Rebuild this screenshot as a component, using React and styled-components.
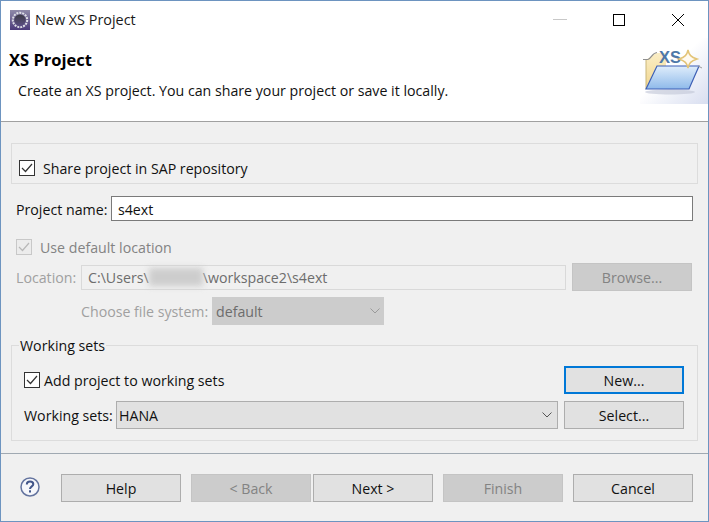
import React from "react";
import styled, { createGlobalStyle } from "styled-components";

const Global = createGlobalStyle`
  html, body { margin: 0; padding: 0; background: #f0f0f0; }
  * { box-sizing: border-box; }
`;

const Window = styled.div`
  width: 709px;
  height: 522px;
  border: 1px solid #6d94c0;
  background: #f0f0f0;
  display: flex;
  flex-direction: column;
  font-family: "Open Sans", "Noto Sans", sans-serif;
  font-size: 14.2px;
  color: #111;
  overflow: hidden;
`;

const TitleBar = styled.div`
  height: 37px;
  flex: none;
  background: #fff;
  display: flex;
  align-items: center;
  padding-left: 9px;
  gap: 5px;
`;

const TitleText = styled.span`
  flex: 1;
  font-size: 14.4px;
  color: #1a1a1a;
`;

const WinControls = styled.div`
  display: flex;
  align-items: center;
  gap: 1px;
  margin-right: 1px;
`;

const WinButton = styled.div`
  width: 58px;
  height: 37px;
  display: flex;
  align-items: center;
  justify-content: center;
`;

const Header = styled.header`
  height: 84px;
  flex: none;
  background: #fff;
  border-bottom: 1px solid #a0a0a0;
  display: flex;
`;

const HeaderText = styled.div`
  flex: 1;
  padding: 11px 0 0 8px;
`;

const HeaderTitle = styled.h1`
  margin: 0;
  font-size: 16.5px;
  line-height: 22px;
  font-weight: 700;
  color: #000;
`;

const HeaderSub = styled.p`
  margin: 10px 0 0 9px;
  font-size: 14.2px;
  line-height: 20px;
  color: #111;
`;

const Banner = styled.div`
  width: 68px;
  height: 67px;
  flex: none;
  align-self: flex-start;
`;

const Body = styled.main`
  height: 332px;
  flex: none;
  padding: 21px 0 0 10px;
  border-bottom: 1px solid #a0a9b2;
  width: 707px;
`;

const Column = styled.div`
  width: 687px;
  display: flex;
  flex-direction: column;
`;

const ShareGroup = styled.section`
  height: 41px;
  border: 1px solid #dcdcdc;
  padding: 16px 0 0 7px;
`;

const CheckRow = styled.label`
  display: flex;
  align-items: center;
  height: 16px;
  gap: ${(p) => p.$gap || 8}px;
  margin-left: ${(p) => p.$ml || 0}px;
  margin-top: ${(p) => p.$mt || 0}px;
  color: ${(p) => (p.$disabled ? "#838383" : "#111")};
`;

const Box = styled.span`
  width: 16px;
  height: 16px;
  flex: none;
  border: 1px solid ${(p) => (p.$disabled ? "#c8c8c8" : "#333")};
  background: ${(p) => (p.$disabled ? "#ececec" : "#fff")};
  display: flex;
  align-items: center;
  justify-content: center;
`;

const FieldRow = styled.div`
  display: flex;
  align-items: center;
  height: ${(p) => p.$h || 28}px;
  margin-top: ${(p) => p.$mt || 0}px;
  padding-left: ${(p) => p.$pl || 5}px;
`;

const FieldLabel = styled.span`
  width: ${(p) => p.$w}px;
  flex: none;
  white-space: nowrap;
  padding-top: ${(p) => p.$pt || 0}px;
  color: ${(p) => (p.$disabled ? "#a0a0a0" : "#111")};
`;

const TextInput = styled.input`
  width: 582px;
  height: 25px;
  border: 1px solid #7a7a7a;
  background: #fff;
  padding: 2px 6px 0;
  font: inherit;
  color: #111;
  outline: none;
`;

const PathBox = styled.div`
  width: 485px;
  height: 25px;
  border: 1px solid #d9d9d9;
  padding: 0 6px;
  display: flex;
  align-items: center;
  color: #6d6d6d;
  white-space: nowrap;
`;

const Redacted = styled.span`
  display: inline-block;
  width: 54px;
  height: 18px;
  background: #cdcdcd;
  filter: blur(3px);
`;

const Button = styled.button`
  width: 120px;
  height: 28px;
  flex: none;
  padding: 0;
  font: inherit;
  color: ${(p) => (p.disabled ? "#838383" : "#111")};
  background: ${(p) => (p.disabled ? "#cccccc" : "#e1e1e1")};
  border: ${(p) => (p.$focus ? "2px solid #0078d7" : `1px solid ${p.disabled ? "#c4c4c4" : "#adadad"}`)};
  margin-left: ${(p) => p.$ml || 0}px;
`;

const DisabledSelect = styled.div`
  width: 172px;
  height: 28px;
  background: #cccccc;
  color: #6d6d6d;
  display: flex;
  align-items: center;
  justify-content: space-between;
  padding: 0 4px 0 4px;
`;

const WorkingGroup = styled.fieldset`
  margin: 10px 0 0;
  padding: 0;
  height: 106px;
  border: 1px solid #dcdcdc;
  min-width: 0;
`;

const Legend = styled.legend`
  margin-left: 7px;
  padding: 1px 1px 0;
  line-height: 20px;
  font-size: 14.2px;
  color: #111;
`;

const AddRow = styled.div`
  display: flex;
  align-items: center;
  height: 28px;
  margin-top: 10px;
  padding-left: 12px;
`;

const Spacer = styled.div`
  flex: 1;
`;

const SelectRow = styled.div`
  display: flex;
  align-items: center;
  height: 28px;
  margin-top: 7px;
  padding-left: 12px;
`;

const Combo = styled.div`
  width: 442px;
  height: 28px;
  background: #e1e1e1;
  border: 1px solid #adadad;
  display: flex;
  align-items: center;
  justify-content: space-between;
  padding: 0 5px 0 2px;
  color: #111;
`;

const GroupEnd = styled.div`
  width: 120px;
  margin: 0 13px 0 6px;
  flex: none;
`;

const Footer = styled.footer`
  flex: 1;
  display: flex;
  align-items: flex-start;
  padding: 20px 0 0 19px;
`;

const HelpIcon = styled.div`
  width: 20px;
  height: 20px;
  margin: 3px 21px 0 0;
  flex: none;
`;

const Chevron = ({ color = "#555" }) => (
  <svg width="10" height="6" viewBox="0 0 10 6" fill="none">
    <path d="M0.5 0.5L5 5L9.5 0.5" stroke={color} />
  </svg>
);

const Check = ({ color = "#333" }) => (
  <svg width="12" height="10" viewBox="0 0 12 10" fill="none">
    <path d="M1 5L4.5 8.5L11 1" stroke={color} strokeWidth="1.2" />
  </svg>
);

const AppIcon = () => (
  <svg width="20" height="20" viewBox="0 0 20 20">
    <defs>
      <linearGradient id="ai" x1="0" y1="0" x2="0" y2="1">
        <stop offset="0" stopColor="#8f8aa8" />
        <stop offset="1" stopColor="#4b3a7a" />
      </linearGradient>
      <linearGradient id="ac" x1="0" y1="0" x2="0" y2="1">
        <stop offset="0" stopColor="#3c3a44" />
        <stop offset="1" stopColor="#5a4f80" />
      </linearGradient>
    </defs>
    <rect width="20" height="20" fill="url(#ai)" />
    <circle cx="10" cy="10" r="7.2" fill="none" stroke="#dfe0e6" strokeWidth="2" strokeDasharray="2 1" />
    <circle cx="10" cy="10" r="5.6" fill="url(#ac)" />
  </svg>
);

const XsBanner = () => (
  <svg width="68" height="67" viewBox="0 0 68 67">
    <defs>
      <linearGradient id="bg" x1="0.45" y1="0.45" x2="1" y2="1">
        <stop offset="0" stopColor="#ffffff" />
        <stop offset="1" stopColor="#d8def0" />
      </linearGradient>
      <linearGradient id="fd" x1="0" y1="0" x2="0" y2="1">
        <stop offset="0" stopColor="#dfedfb" />
        <stop offset="1" stopColor="#8fbaea" />
      </linearGradient>
      <linearGradient id="bk" x1="0" y1="0" x2="0" y2="1">
        <stop offset="0" stopColor="#fbeec6" />
        <stop offset="1" stopColor="#f1d68e" />
      </linearGradient>
    </defs>
    <rect width="68" height="66" fill="url(#bg)" />
    <ellipse cx="30" cy="54" rx="25" ry="2.5" fill="#bfc5d6" opacity="0.6" />
    <path d="M6 21C11 21 12 15 18 15H26V28H17L6 51Z" fill="url(#bk)" />
    <path d="M6 51V21" stroke="#c9b67a" />
    <path d="M3 21.5H8C11 21 12 15 17 14.5" stroke="#8f8f8f" strokeWidth="1.2" fill="none" />
    <path d="M6 51L17 28H59L49 51Z" fill="url(#fd)" stroke="#3d5fb5" strokeWidth="1.2" />
    <path d="M58 28L62 30" stroke="#9a9a9a" />
    <text x="19" y="25" fontFamily="Liberation Sans" fontSize="16.5" fontWeight="700" fill="#4f78a8">XS</text>
    <path d="M48 12C49 17 51 19 57 21C51 23 49 25 48 30C47 25 45 23 39 21C45 19 47 17 48 12Z" fill="#fffaf0" stroke="#e3c477" strokeWidth="1.5" />
  </svg>
);

const Help = () => (
  <svg width="20" height="20" viewBox="0 0 20 20" fill="none">
    <circle cx="10" cy="10" r="9" fill="#f6f7fb" stroke="#64749f" strokeWidth="1.5" />
    <path d="M6.8 7.6C6.8 5.5 8.4 4.6 10 4.6C11.9 4.6 13.3 5.7 13.3 7.3C13.3 9.4 10 9.4 10 12" stroke="#42568a" strokeWidth="2" />
    <rect x="9" y="13.3" width="2" height="2.2" fill="#42568a" />
  </svg>
);

export default function App() {
  return (
    <>
      <Global />
      <Window>
        <TitleBar>
          <AppIcon />
          <TitleText>New XS Project</TitleText>
          <WinControls>
            <WinButton>
              <svg width="14" height="2"><rect y="0" width="14" height="1" fill="#c8c8c8" /></svg>
            </WinButton>
            <WinButton>
              <svg width="12" height="12"><rect x="0.5" y="0.5" width="11" height="11" fill="none" stroke="#000" /></svg>
            </WinButton>
            <WinButton>
              <svg width="12" height="12"><path d="M0 0L12 12M12 0L0 12" stroke="#000" /></svg>
            </WinButton>
          </WinControls>
        </TitleBar>
        <Header>
          <HeaderText>
            <HeaderTitle>XS Project</HeaderTitle>
            <HeaderSub>Create an XS project. You can share your project or save it locally.</HeaderSub>
          </HeaderText>
          <Banner><XsBanner /></Banner>
        </Header>
        <Body>
          <Column>
            <ShareGroup>
              <CheckRow>
                <Box><Check /></Box>
                Share project in SAP repository
              </CheckRow>
            </ShareGroup>
            <FieldRow $h={25} $mt={12}>
              <FieldLabel $w={95} $pt={2}>Project name:</FieldLabel>
              <TextInput defaultValue="s4ext" />
            </FieldRow>
            <CheckRow $disabled $ml={5} $mt={18}>
              <Box $disabled><Check color="#b8b8b8" /></Box>
              Use default location
            </CheckRow>
            <FieldRow $mt={8}>
              <FieldLabel $w={65} $disabled>Location:</FieldLabel>
              <PathBox>C:\Users\<Redacted />\workspace2\s4ext</PathBox>
              <Button disabled $ml={6}>Browse...</Button>
            </FieldRow>
            <FieldRow $mt={6} $pl={70}>
              <FieldLabel $w={131} $disabled>Choose file system:</FieldLabel>
              <DisabledSelect>default<Chevron color="#9a9a9a" /></DisabledSelect>
            </FieldRow>
            <WorkingGroup>
              <Legend>Working sets</Legend>
              <AddRow>
                <CheckRow $gap={4}>
                  <Box><Check /></Box>
                  Add project to working sets
                </CheckRow>
                <Spacer />
                <GroupEnd><Button $focus>New...</Button></GroupEnd>
              </AddRow>
              <SelectRow>
                <FieldLabel $w={92}>Working sets:</FieldLabel>
                <Combo>HANA<Chevron /></Combo>
                <GroupEnd><Button>Select...</Button></GroupEnd>
              </SelectRow>
            </WorkingGroup>
          </Column>
        </Body>
        <Footer>
          <HelpIcon><Help /></HelpIcon>
          <Button>Help</Button>
          <Button disabled $ml={10}>&lt; Back</Button>
          <Button $ml={2}>Next &gt;</Button>
          <Button disabled $ml={10}>Finish</Button>
          <Button $ml={10}>Cancel</Button>
        </Footer>
      </Window>
    </>
  );
}
